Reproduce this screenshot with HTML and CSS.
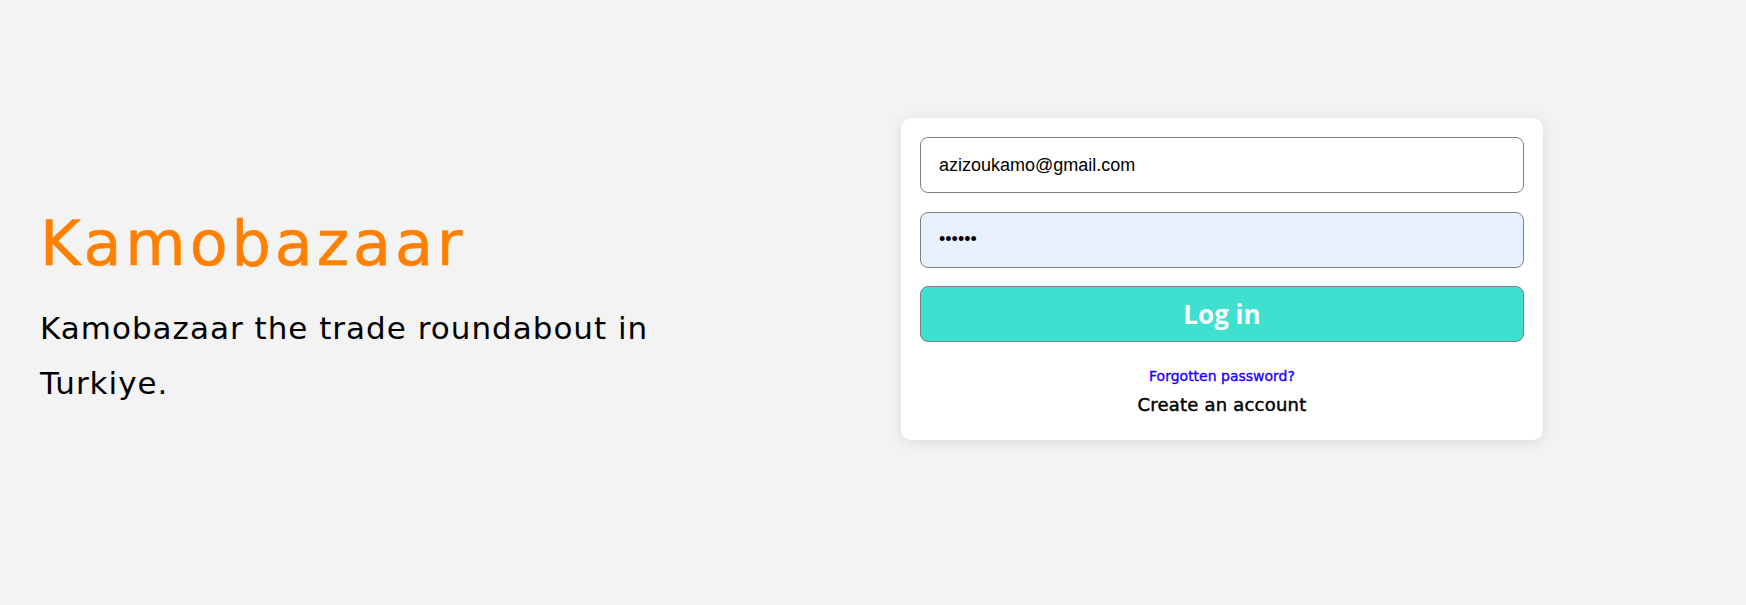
FILE: index.html
```html
<!DOCTYPE html>
<html lang="en">
<head>
<meta charset="utf-8">
<title>Kamobazaar</title>
<link rel="stylesheet" href="styles.css">
</head>
<body>
<main class="page">
  <section class="intro">
    <h1 class="brand">Kamobazaar</h1>
    <p class="tagline">Kamobazaar the trade roundabout in Turkiye.</p>
  </section>
  <section class="card">
    <form class="login-form">
      <input class="field" type="email" value="azizoukamo@gmail.com">
      <input class="field field-filled" type="password" value="123456">
      <button class="login-btn" type="button">Log in</button>
    </form>
    <a class="forgot" href="#">Forgotten password?</a>
    <a class="create" href="#">Create an account</a>
  </section>
</main>
</body>
</html>
```

FILE: styles.css
```css
html, body {
  margin: 0;
  padding: 0;
}

body {
  background: #f3f3f3;
  font-family: "DejaVu Sans", sans-serif;
  width: 1746px;
  height: 605px;
  overflow: hidden;
}

.page {
  display: flex;
  justify-content: space-between;
  align-items: flex-start;
  padding: 118px 203px 0 40px;
}

.intro {
  width: 700px;
  margin-top: 89px;
}

.brand {
  margin: 0;
  font-family: "DejaVu Sans", sans-serif;
  font-weight: normal;
  font-size: 62px;
  line-height: 74px;
  letter-spacing: 3.9px;
  color: #ff8000;
  -webkit-text-stroke: 0.6px #ff8000;
}

.tagline {
  margin: 20px 0 0;
  font-size: 31px;
  line-height: 55px;
  letter-spacing: 1px;
  color: #000;
}

.card {
  width: 642px;
  box-sizing: border-box;
  background: #fff;
  border-radius: 10px;
  padding: 19px 19px 23px;
  box-shadow: 0 2px 14px rgba(0, 0, 0, 0.1);
  display: flex;
  flex-direction: column;
  align-items: center;
}

.login-form {
  width: 100%;
  display: flex;
  flex-direction: column;
  gap: 18.5px;
}

.field {
  box-sizing: border-box;
  width: 100%;
  height: 56px;
  border: 1px solid #808080;
  border-radius: 8px;
  padding: 0 18px;
  font-family: "Liberation Sans", Arial, sans-serif;
  font-size: 18px;
  color: #000;
  background: #fff;
  outline: none;
}

.field-filled {
  background: #e8f0fe;
}

.login-btn {
  box-sizing: border-box;
  width: 100%;
  height: 56px;
  border: 1px solid #808080;
  border-radius: 8px;
  background: #40e0d0;
  color: #fff;
  font-family: "Open Sans", sans-serif;
  font-weight: 700;
  font-size: 26px;
  line-height: 1;
  cursor: pointer;
}

.forgot {
  margin-top: 24px;
  font-size: 14px;
  line-height: 20px;
  color: #1a00ff;
  text-decoration: none;
  -webkit-text-stroke: 0.35px #1a00ff;
}

.create {
  margin-top: 7px;
  font-size: 18px;
  line-height: 24px;
  letter-spacing: 0.2px;
  color: #000;
  text-decoration: none;
  -webkit-text-stroke: 0.45px #000;
}
```
